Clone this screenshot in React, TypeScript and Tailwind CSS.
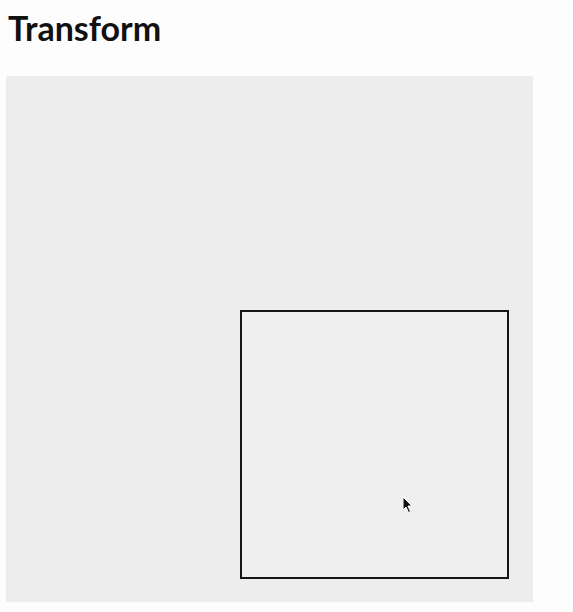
const Cursor = () => (
  <svg width="12" height="18" viewBox="0 0 12 18" className="absolute left-[402px] top-[496px]">
    <path d="M1 1 L1 14 L4 11 L6.5 16.5 L8.5 15.5 L6 10 L10 10 Z" fill="#111" stroke="#fff" strokeWidth="1" />
  </svg>
);

export default function App() {
  return (
    <div className="relative h-[612px] w-[573px] bg-[#fdfdfd] font-['Lato','Open_Sans',sans-serif]">
      <div className="px-[8px] pt-[11px]">
        <h1 className="text-[34px] font-bold leading-[34px] tracking-[0px] text-[#111]">
          Transform
        </h1>
      </div>
      <div className="ml-[6px] mt-[31px] flex h-[526px] w-[527px] items-end justify-end bg-[#ededed] pb-[23px] pr-[24px]">
        <div className="h-[269px] w-[269px] border-2 border-[#151515] bg-[#efefef]" />
      </div>
      <Cursor />
    </div>
  );
}
